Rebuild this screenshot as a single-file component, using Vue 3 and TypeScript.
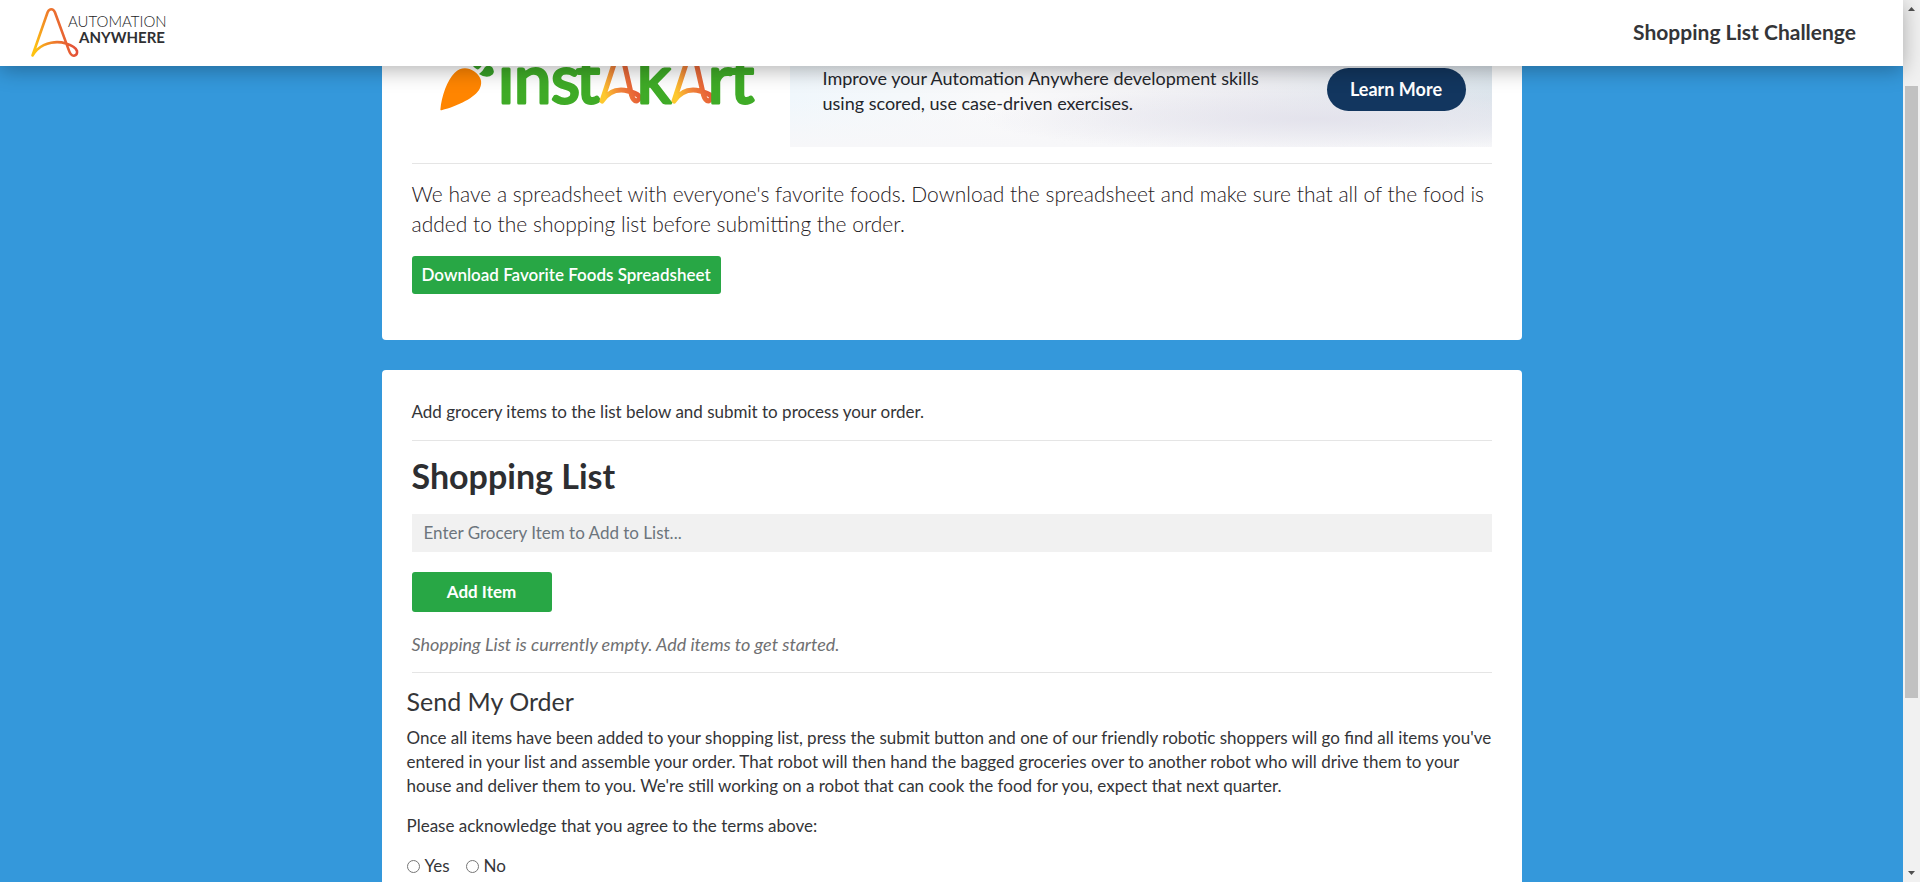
<script setup lang="ts">
import { ref } from 'vue'

const item = ref('')
const items = ref<string[]>([])
const agree = ref<'yes' | 'no' | ''>('')

function addItem() {
  const name = item.value.trim()
  if (!name) return
  items.value.push(name)
  item.value = ''
}
</script>

<template>
  <div class="app">
    <div class="page">
      <header class="topbar">
        <a href="#" class="brand" aria-label="Automation Anywhere">
          <svg width="150" height="58" viewBox="25 4 150 58">
            <defs>
              <linearGradient id="brandMark" x1="0" y1="0.6" x2="1" y2="0.4">
                <stop offset="0" stop-color="#fdc211" />
                <stop offset="0.45" stop-color="#ee7a2c" />
                <stop offset="1" stop-color="#e0453a" />
              </linearGradient>
            </defs>
            <path
              d="M32.5 55.5L47.6 12.2Q49 9.2 51.3 9.2Q53.6 9.2 54.9 12.2L68.6 49.6Q70.8 56 74 55.7Q77.6 55 77 51Q75.5 46.6 66 43.6C57 40.6 45 42.4 37.6 49.2Q34.4 52.4 32.5 55.5Z"
              fill="none" stroke="url(#brandMark)" stroke-width="2.6" stroke-linejoin="round"
            />
            <text x="68" y="27" class="brand-light">AUTOMATION</text>
            <text x="79" y="43" class="brand-bold">ANYWHERE</text>
          </svg>
        </a>
        <div class="title">Shopping List Challenge</div>
      </header>

      <main class="content">
        <section class="card intro">
          <div class="hero">
            <svg class="logo" width="378" height="81" viewBox="0 0 378 81" role="img" aria-label="Instakart">
              <defs>
                <linearGradient id="swoosh" x1="0" y1="0.7" x2="1" y2="0.3">
                  <stop offset="0" stop-color="#fdc82f" />
                  <stop offset="0.4" stop-color="#f0813a" />
                  <stop offset="1" stop-color="#e04b35" />
                </linearGradient>
              </defs>
              <path
                d="M28.4 43.6C29.4 30 35.5 14 42.5 7C49 0.6 56 1.4 62 5.2C68.6 9.8 71 15.4 67.8 22.6C63.6 31.4 46 40.2 29.6 44.2Q28.2 44.6 28.4 43.6Z"
                fill="#ff8500"
              />
              <path d="M61 0Q64 3.4 66 3.4Q69 2 70.6 -2Z" fill="#38a028" />
              <path d="M67 8Q71 5 73 1Q76 -1.6 80 1Q83.4 5.6 80.6 8.6Q75 13.4 67 8Z" fill="#38a028" />
              <text class="wordmark" y="37" x="86 102 139 164">inst</text>
              <path
                id="swooshMark"
                d="M190 35L204 -8Q207.500 -14 211 -8L219.500 29Q221.500 35.500 225 34.800Q228.500 33 226.500 29.600Q224 27 216 25C206 22.500 197 25 190 35Z"
                fill="none" stroke="url(#swoosh)" stroke-width="5" stroke-linejoin="round"
              />
              <use href="#swooshMark" x="72" />
              <text class="wordmark" y="37" x="225 296 318">krt</text>
            </svg>
            <div class="banner">
              <p>Improve your Automation Anywhere development skills<br />using scored, use case-driven exercises.</p>
              <a href="#" class="learn">Learn More</a>
            </div>
          </div>
          <hr />
          <p class="lead">
            We have a spreadsheet with everyone's favorite foods. Download the spreadsheet and make sure that all of the
            food is added to the shopping list before submitting the order.
          </p>
          <a href="#" class="btn download">Download Favorite Foods Spreadsheet</a>
        </section>

        <section class="card">
          <p>Add grocery items to the list below and submit to process your order.</p>
          <hr />
          <form @submit.prevent="addItem">
            <h1><label for="item">Shopping List</label></h1>
            <input id="item" v-model="item" type="text" class="field" placeholder="Enter Grocery Item to Add to List..." />
            <button type="submit" class="btn add">Add Item</button>
          </form>
          <p v-if="!items.length" class="empty">Shopping List is currently empty. Add items to get started.</p>
          <ul v-else>
            <li v-for="(name, i) in items" :key="i">{{ name }}</li>
          </ul>
          <hr />
          <div class="order">
            <h4>Send My Order</h4>
            <p>
              Once all items have been added to your shopping list, press the submit button and one of our friendly
              robotic shoppers will go find all items you've entered in your list and assemble your order. That robot
              will then hand the bagged groceries over to another robot who will drive them to your house and deliver
              them to you. We're still working on a robot that can cook the food for you, expect that next quarter.
            </p>
            <p id="terms">Please acknowledge that you agree to the terms above:</p>
            <div class="choices" role="radiogroup" aria-labelledby="terms">
              <label><input v-model="agree" type="radio" name="agree" value="yes" />Yes</label>
              <label><input v-model="agree" type="radio" name="agree" value="no" />No</label>
            </div>
          </div>
        </section>
      </main>
    </div>

    <div class="scrollbar" aria-hidden="true">
      <svg width="17" height="17" viewBox="0 0 17 17"><path d="M5 11L8.500 7L12 11Z" fill="#505050" /></svg>
      <div class="track"><div class="thumb"></div></div>
      <svg width="17" height="17" viewBox="0 0 17 17"><path d="M5 6L8.500 10L12 6Z" fill="#505050" /></svg>
    </div>
  </div>
</template>

<style>
body {
  margin: 0;
  overflow: hidden;
}
</style>

<style scoped>
.app,
.app * {
  box-sizing: border-box;
}

.app {
  display: grid;
  grid-template-columns: minmax(0, 1fr) 17px;
  height: 100vh;
  background: #3498db;
  color: #343538;
  font: 400 17px/24px Lato, "Open Sans", sans-serif;
}

.page {
  display: flex;
  flex-direction: column;
  min-height: 0;
}

.topbar {
  z-index: 1;
  display: flex;
  flex: none;
  align-items: center;
  justify-content: space-between;
  height: 66px;
  padding: 0 47px 0 25px;
  background: #fff;
  box-shadow: 0 4px 20px rgba(0, 0, 0, 0.3);
}

.brand svg {
  display: block;
}

.brand-light {
  font-size: 15px;
  font-weight: 300;
  fill: #1c1c1e;
}

.brand-bold {
  font-size: 15px;
  font-weight: 700;
  fill: #2f3033;
}

.title {
  padding-bottom: 2px;
  font-size: 21px;
  font-weight: 700;
}

.content {
  flex: 1;
  min-height: 0;
  overflow: hidden;
}

.card {
  width: 100%;
  max-width: 1140px;
  margin: 0 auto 30px;
  padding: 30px;
  background: #fff;
  border-radius: 4px;
}

.intro {
  padding: 0 30px 46px;
  border-radius: 0 0 4px 4px;
}

p,
h1,
h4 {
  margin: 0 0 16px;
}

hr {
  margin: 16px 0;
  border: 0;
  border-top: 1px solid #e5e5e5;
}

.hero {
  display: grid;
  grid-template-columns: 378px minmax(0, 1fr);
}

.logo {
  display: block;
}

.wordmark {
  font-size: 67px;
  font-weight: 400;
  fill: #3fab27;
  stroke: #3fab27;
  stroke-width: 3px;
  stroke-linejoin: round;
}

.banner {
  display: flex;
  align-items: flex-start;
  justify-content: space-between;
  padding: 0 26px 0 33px;
  background:
    radial-gradient(ellipse at 75% 65%, rgba(226, 225, 235, 0.9), rgba(226, 225, 235, 0) 45%),
    linear-gradient(to bottom, rgba(246, 246, 248, 0) 40%, #f7f7f9),
    linear-gradient(to right, #f0f7fc, #f9f9fa 30%, #efeff3 65%, #dce5ec);
}

.banner p {
  margin: 0;
  color: #24262b;
  font-size: 18px;
  line-height: 25px;
}

.learn {
  width: 139px;
  margin-top: 2px;
  padding: 9px 0;
  border-radius: 22px;
  background: #12365f;
  color: #fff;
  font-size: 18px;
  font-weight: 700;
  line-height: 25px;
  text-align: center;
  text-decoration: none;
}

.lead {
  margin: -1px 0 17px;
  color: #1f2023;
  font-size: 21px;
  font-weight: 300;
  line-height: 30px;
}

.btn {
  display: block;
  width: fit-content;
  border: 0;
  border-radius: 3px;
  background: #28a745;
  color: #fff;
  font: 700 17px/24px Lato, "Open Sans", sans-serif;
  text-decoration: none;
}

.download {
  padding: 7px 10px;
  font-weight: 600;
}

.add {
  width: 140px;
  height: 40px;
  margin: 20px 0;
}

h1 {
  margin-bottom: 20px;
  font-size: 34px;
  font-weight: 700;
  line-height: 37px;
  color: #2d2e31;
}

.field {
  display: block;
  width: 100%;
  height: 38px;
  padding: 0 12px 2px;
  border: 0;
  background: #f1f1f1;
  color: inherit;
  font: inherit;
}

.field::placeholder {
  color: #6c757d;
  opacity: 1;
}

.empty {
  color: #6f7072;
  font-size: 18px;
  font-style: italic;
}

.order {
  margin: 0 -5px;
}

h4 {
  margin-bottom: 13px;
  font-size: 25px;
  font-weight: 400;
  line-height: 24px;
}

.choices {
  display: flex;
  gap: 16px;
}

.choices label {
  display: flex;
  align-items: center;
  gap: 5px;
}

.choices input {
  width: 13px;
  height: 13px;
  margin: 0;
}

.scrollbar {
  display: flex;
  flex-direction: column;
  background: #f1f1f1;
}

.track {
  display: grid;
  flex: 1;
  grid-template-rows: 69fr 612fr 167fr;
  padding: 0 2px;
}

.thumb {
  grid-row: 2;
  background: #c1c1c1;
}
</style>
